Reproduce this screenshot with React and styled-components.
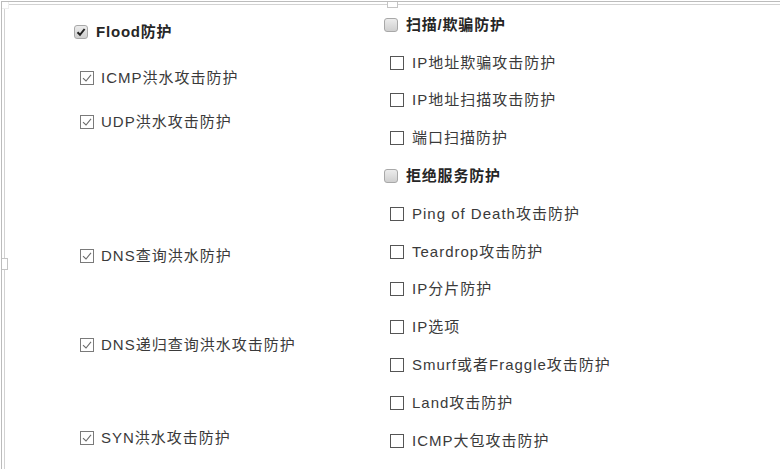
import React from 'react'
import styled, { createGlobalStyle } from 'styled-components'

const GlobalStyle = createGlobalStyle`
  html, body {
    margin: 0;
    padding: 0;
    background: #fff;
  }
  body {
    font-family: "Liberation Sans", "Noto Sans CJK SC", sans-serif;
    color: #333;
  }
`

const floodItems = [
  { label: 'ICMP洪水攻击防护', offset: 16 },
  { label: 'UDP洪水攻击防护', offset: 14 },
  { label: 'DNS查询洪水防护', offset: 104 },
  { label: 'DNS递归查询洪水攻击防护', offset: 59 },
  { label: 'SYN洪水攻击防护', offset: 63 },
]

const groups = [
  {
    title: '扫描/欺骗防护',
    items: ['IP地址欺骗攻击防护', 'IP地址扫描攻击防护', '端口扫描防护'],
  },
  {
    title: '拒绝服务防护',
    items: [
      'Ping of Death攻击防护',
      'Teardrop攻击防护',
      'IP分片防护',
      'IP选项',
      'Smurf或者Fraggle攻击防护',
      'Land攻击防护',
      'ICMP大包攻击防护',
    ],
  },
]

const BoxIcon = ({ checked }) => (
  <svg width="14" height="14" viewBox="0 0 14 14">
    <rect x="0.5" y="0.5" width="13" height="13" fill="#fff" stroke={checked ? '#7a7a7a' : '#555'} />
    {checked && (
      <path d="M3 7.2 L6 10 L11 3.8" fill="none" stroke="#6a6a6a" strokeWidth="1.1" />
    )}
  </svg>
)

const GroupCheck = ({ checked }) => (
  <GroupBox>
    {checked && (
      <svg width="10" height="10" viewBox="0 0 10 10">
        <path d="M1.5 5.2 L4 7.8 L8.6 2" fill="none" stroke="#222" strokeWidth="2" />
      </svg>
    )}
  </GroupBox>
)

const App = () => {
  return (
    <>
      <GlobalStyle />
      <Outer>
        <Inner>
          <Columns>
            <LeftColumn>
              <GroupRow $offset={12}>
                <GroupCheck checked />
                <GroupTitle>Flood防护</GroupTitle>
              </GroupRow>
              {floodItems.map((item) => (
                <FloodRow key={item.label} $offset={item.offset}>
                  <BoxIcon checked />
                  <Label>{item.label}</Label>
                </FloodRow>
              ))}
            </LeftColumn>
            <RightColumn>
              {groups.map((group) => (
                <React.Fragment key={group.title}>
                  <RightRow>
                    <GroupCheck />
                    <GroupTitle>{group.title}</GroupTitle>
                  </RightRow>
                  {group.items.map((label) => (
                    <RightRow key={label} $sub>
                      <BoxIcon />
                      <Label>{label}</Label>
                    </RightRow>
                  ))}
                </React.Fragment>
              ))}
            </RightColumn>
          </Columns>
        </Inner>
        <Handle $corner />
        <Handle $top />
        <Handle $left />
      </Outer>
    </>
  )
}

export default App

const Outer = styled.div`
  position: relative;
  height: 468px;
  margin: 1px 0 0 1px;
  border-top: 1px solid #bcbcbc;
  border-left: 1px solid #bcbcbc;
  padding: 2px 0 0 2px;
  overflow: hidden;
`

const Inner = styled.div`
  height: 100%;
  border-top: 1px solid #d2d2d2;
  border-left: 1px solid #d2d2d2;
`

const Handle = styled.span`
  position: absolute;
  background: #fff;
  box-sizing: border-box;
  ${(p) => p.$corner && 'left: -1px; top: -1px; width: 8px; height: 8px; border: 1px solid #eee;'}
  ${(p) => p.$top && 'left: 385px; top: -2px; width: 11px; height: 8px; border: 1px solid #c4c4c4; border-top: none;'}
  ${(p) => p.$left && 'left: -2px; top: 256px; width: 8px; height: 12px; border: 1px solid #c4c4c4; border-left: none;'}
`

const Columns = styled.div`
  display: grid;
  grid-template-columns: 379px 1fr;
`

const LeftColumn = styled.div`
  display: flex;
  flex-direction: column;
  padding-left: 69px;
`

const RightColumn = styled.div`
  display: flex;
  flex-direction: column;
  padding-top: 1px;
`

const GroupRow = styled.div`
  display: flex;
  align-items: center;
  gap: 8px;
  height: 30px;
  margin-top: ${(p) => p.$offset}px;
`

const FloodRow = styled.div`
  display: flex;
  align-items: center;
  gap: 7px;
  height: 30px;
  padding-left: 6px;
  margin-top: ${(p) => p.$offset}px;
`

const RightRow = styled.div`
  display: flex;
  align-items: center;
  gap: 8px;
  height: 37.8px;
  padding-left: ${(p) => (p.$sub ? '6px' : '0')};
`

const GroupBox = styled.span`
  display: inline-flex;
  align-items: center;
  justify-content: center;
  box-sizing: border-box;
  width: 14px;
  height: 14px;
  border: 1px solid #a8a8a8;
  border-radius: 3px;
  background: linear-gradient(#ececec, #cfcfcf);
  flex: none;
`

const GroupTitle = styled.span`
  font-size: 15px;
  font-weight: 700;
  line-height: 20px;
  letter-spacing: 0.8px;
  color: #262626;
`

const Label = styled.span`
  font-size: 15px;
  line-height: 20px;
  letter-spacing: 1px;
  color: #3a3a3a;
  white-space: nowrap;
`
